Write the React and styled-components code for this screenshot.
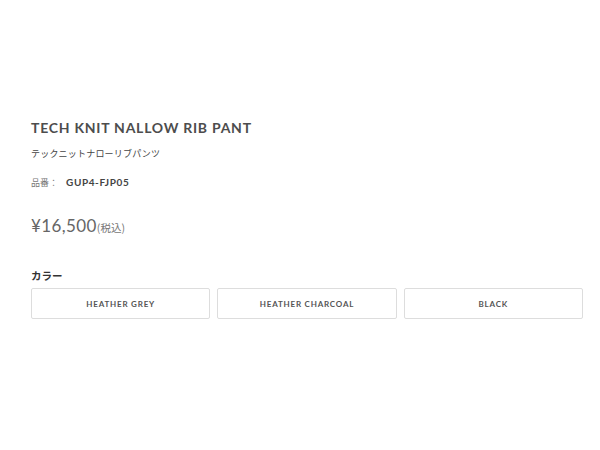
import React from 'react';
import styled, { createGlobalStyle } from 'styled-components';

const GlobalStyle = createGlobalStyle`
  html, body {
    margin: 0;
    padding: 0;
    background: #fff;
  }
  body {
    font-family: 'Lato', 'Noto Sans CJK JP', sans-serif;
    color: #444;
  }
`;

const Page = styled.div`
  width: 600px;
  height: 450px;
  box-sizing: border-box;
  padding: 119px 17px 0 31px;
`;

const Title = styled.h1`
  margin: 0;
  font-size: 14px;
  font-weight: 700;
  letter-spacing: 0.75px;
  color: #4d4d4d;
  line-height: 18px;
`;

const SubTitle = styled.p`
  margin: 10px 0 0;
  font-size: 9px;
  line-height: 14px;
  color: #444;
  letter-spacing: 0.2px;
  font-family: 'Noto Sans CJK JP', sans-serif;
`;

const Code = styled.p`
  margin: 14px 0 0;
  font-size: 10px;
  line-height: 14px;
  color: #444;
  display: flex;
  align-items: baseline;
  gap: 8px;
`;

const CodeLabel = styled.span`
  font-size: 9px;
  font-family: 'Noto Sans CJK JP', sans-serif;
  color: #777;
`;

const CodeValue = styled.span`
  font-weight: 700;
  letter-spacing: 0.6px;
`;

const Price = styled.div`
  margin-top: 25px;
  font-size: 17px;
  line-height: 22px;
  color: #666;
  letter-spacing: 0.4px;
`;

const Tax = styled.span`
  font-size: 10.5px;
  font-family: 'Noto Sans CJK JP', sans-serif;
  color: #777;
  letter-spacing: 0;
`;

const Label = styled.div`
  margin-top: 30px;
  font-size: 10.5px;
  font-weight: 700;
  line-height: 14px;
  color: #333;
  font-family: 'Noto Sans CJK JP', sans-serif;
`;

const Options = styled.div`
  margin-top: 5px;
  display: grid;
  grid-template-columns: repeat(3, 1fr);
  gap: 7px;
`;

const Option = styled.button`
  height: 31px;
  border: 1px solid #ddd;
  background: #fff;
  border-radius: 2px;
  font-family: 'Lato', sans-serif;
  font-size: 8px;
  font-weight: 700;
  letter-spacing: 0.8px;
  color: #555;
  padding: 0;
`;

const colors = ['HEATHER GREY', 'HEATHER CHARCOAL', 'BLACK'];

export default function App() {
  return (
    <>
      <GlobalStyle />
      <Page>
        <Title>TECH KNIT NALLOW RIB PANT</Title>
        <SubTitle>テックニットナローリブパンツ</SubTitle>
        <Code>
          <CodeLabel>品番：</CodeLabel>
          <CodeValue>GUP4-FJP05</CodeValue>
        </Code>
        <Price>
          ¥16,500<Tax>(税込)</Tax>
        </Price>
        <Label>カラー</Label>
        <Options>
          {colors.map((c) => (
            <Option key={c}>{c}</Option>
          ))}
        </Options>
      </Page>
    </>
  );
}
